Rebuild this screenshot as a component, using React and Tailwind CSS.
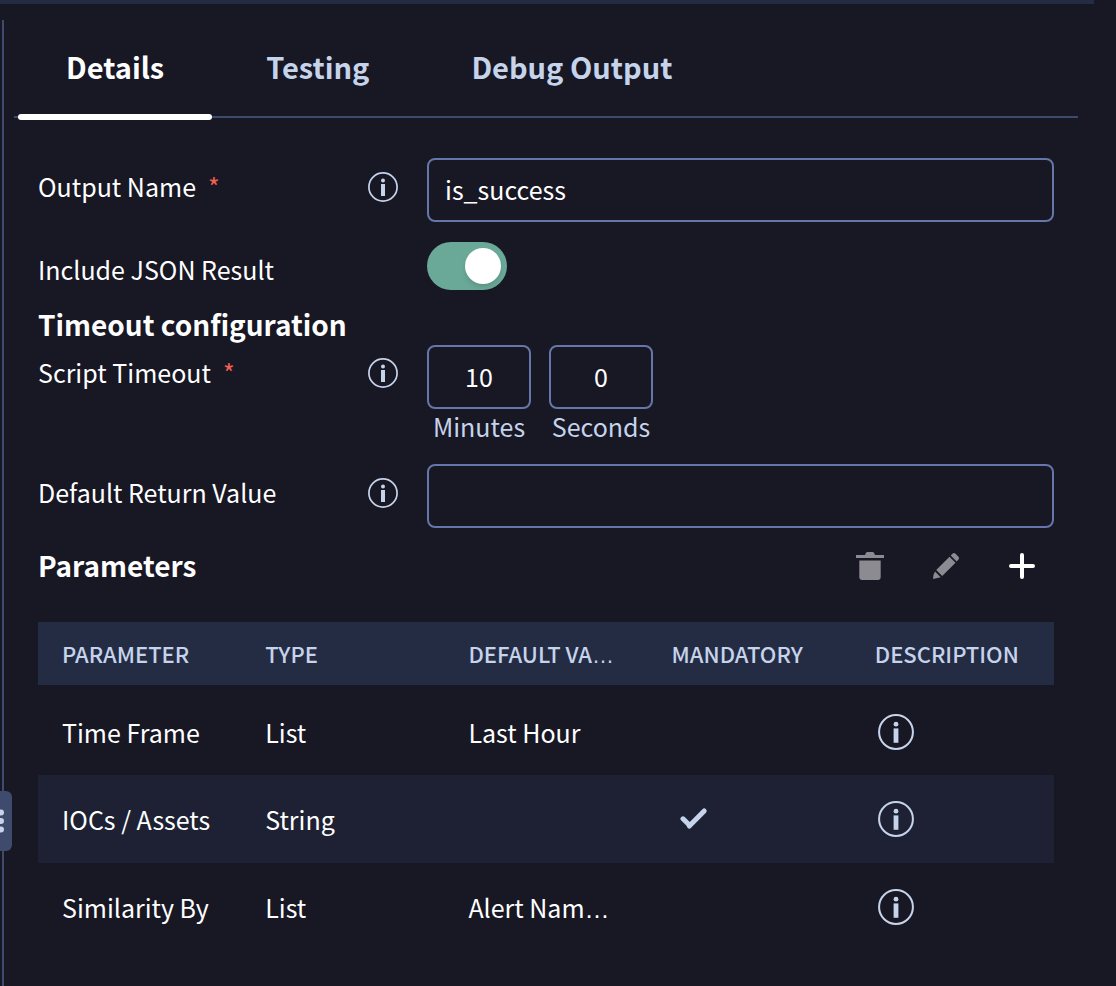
import React from "react";

function InfoIcon({ className }) {
  return (
    <svg viewBox="0 0 30 30" className={className} fill="none" aria-hidden="true">
      <circle cx="15" cy="15" r="14.1" stroke="currentColor" strokeWidth="1.7" />
      <circle cx="15" cy="8.5" r="2" fill="currentColor" />
      <path d="M13 12h4v12h-4z" fill="currentColor" />
    </svg>
  );
}

function InfoButton({ label, large }) {
  return (
    <button type="button" aria-label={label} className="block text-[#c5d3eb]">
      <InfoIcon className={large ? "size-9" : "size-[30px]"} />
    </button>
  );
}

function FieldLabel({ htmlFor, children, required }) {
  return (
    <label htmlFor={htmlFor} className="w-[330px] shrink-0 pb-[2px] text-[25px] leading-8 text-white">
      {children}
      {required && <span className="ml-3 text-[#f2604f]">*</span>}
    </label>
  );
}

/* Sets a trailing ellipsis in a face whose dots sit on the baseline. */
function Shortened({ text }) {
  if (!text.endsWith("…")) return text;
  return (
    <>
      {text.slice(0, -1)}
      <span className="font-['Liberation_Sans',sans-serif] leading-none">…</span>
    </>
  );
}

const tabs = [
  { name: "Details", active: true },
  { name: "Testing", active: false },
  { name: "Debug Output", active: false },
];

const columns = ["PARAMETER", "TYPE", "DEFAULT VA…", "MANDATORY", "DESCRIPTION"];

const parameters = [
  { name: "Time Frame", type: "List", value: "Last Hour", mandatory: false },
  { name: "IOCs / Assets", type: "String", value: "", mandatory: true },
  { name: "Similarity By", type: "List", value: "Alert Nam…", mandatory: false },
];

const box = "h-16 rounded-lg border-2 border-[#6576a8] bg-transparent pb-[2px] text-[25px] text-white outline-none";

export default function App() {
  return (
    <div
      lang="en"
      className="flex min-h-screen flex-col bg-[#181724] font-['Noto_Sans_CJK_KR',sans-serif] text-white"
    >
      <div className="mr-[22px] h-1 bg-[#242c44]" />
      <div className="flex flex-1 pt-4">
        <aside className="relative w-[14px] shrink-0 pl-[2px]">
          <div className="h-full w-[2px] bg-[#3e4b6d]" />
          <button
            type="button"
            aria-label="Resize panel"
            className="absolute top-[771px] left-0 h-[60px] w-3 rounded-r-md bg-[#3e4b6d]"
          >
            <svg viewBox="0 0 12 60" className="h-[60px] w-3" fill="#c5d3eb" aria-hidden="true">
              <circle cx="1" cy="21.5" r="3" />
              <circle cx="1" cy="30" r="3" />
              <circle cx="1" cy="38.5" r="3" />
            </svg>
          </button>
        </aside>

        <main className="min-w-0 flex-1">
          <div role="tablist" className="mr-[38px] flex h-[98px] gap-[6px] border-b-2 border-[#3e4b6d] pl-1">
            {tabs.map((tab) => (
              <button
                key={tab.name}
                type="button"
                role="tab"
                aria-selected={tab.active}
                className={
                  tab.active
                    ? "relative px-12 pb-[2px] text-[29px] font-bold text-white"
                    : "relative px-12 pb-[2px] text-[29px] font-bold text-[#c5d3eb]"
                }
              >
                {tab.name}
                {tab.active && (
                  <span className="absolute -bottom-1 left-0 h-[6px] w-full rounded-sm bg-white" />
                )}
              </button>
            ))}
          </div>

          <form className="pt-10 pr-[62px] pl-6" onSubmit={(e) => e.preventDefault()}>
            <div className="flex items-start">
              <div className="flex h-[58px] items-center">
                <FieldLabel htmlFor="output-name" required>Output Name</FieldLabel>
                <InfoButton label="About output name" />
              </div>
              <input
                id="output-name"
                defaultValue="is_success"
                className={`${box} ml-[29px] min-w-0 flex-1 px-4`}
              />
            </div>

            <div className="mt-5 flex items-start">
              <div className="flex h-14 items-center">
                <FieldLabel htmlFor="include-json">Include JSON Result</FieldLabel>
              </div>
              <label className="ml-[59px] flex h-12 w-20 cursor-pointer items-center rounded-full bg-[#4a5270] p-[6px] has-checked:justify-end has-checked:bg-[#6aa898]">
                <input
                  id="include-json"
                  type="checkbox"
                  role="switch"
                  defaultChecked
                  aria-label="Include JSON Result"
                  className="size-9 appearance-none rounded-full bg-white shadow-md"
                />
              </label>
            </div>

            <h2 className="mt-[6px] mb-px text-[28px] leading-10 font-bold">Timeout configuration</h2>

            <div className="flex items-start">
              <div className="flex h-14 items-center">
                <FieldLabel htmlFor="minutes" required>Script Timeout</FieldLabel>
                <InfoButton label="About script timeout" />
              </div>
              <div className="ml-[29px] flex gap-[18px] text-[25px] leading-[34px] text-[#c5d3eb]">
                <div className="flex w-[104px] flex-col items-center">
                  <input id="minutes" defaultValue="10" className={`${box} w-full text-center`} />
                  <label htmlFor="minutes">Minutes</label>
                </div>
                <div className="flex w-[104px] flex-col items-center">
                  <input id="seconds" defaultValue="0" className={`${box} w-full text-center`} />
                  <label htmlFor="seconds">Seconds</label>
                </div>
              </div>
            </div>

            <div className="mt-[21px] flex items-start">
              <div className="flex h-[58px] items-center">
                <FieldLabel htmlFor="default-return">Default Return Value</FieldLabel>
                <InfoButton label="About default return value" />
              </div>
              <input id="default-return" className={`${box} ml-[29px] min-w-0 flex-1 px-4`} />
            </div>

            <div className="mt-[18px] flex h-10 items-center justify-between">
              <h2 className="pb-[2px] text-[28px] leading-10 font-bold">Parameters</h2>
              <div className="mr-[14px] flex gap-10">
                <button type="button" aria-label="Delete parameter" className="text-[#8b8b91]">
                  <svg viewBox="0 0 36 36" className="size-9" fill="currentColor" aria-hidden="true">
                    <path d="M4 7h9l1-2.2Q14.500 4 15.500 4h5q1 0 1.500.8L23 7h9v3H4zM7.300 12.500h21.400v16.500q0 3-3 3H10.300q-3 0-3-3z" />
                  </svg>
                </button>
                <button type="button" aria-label="Edit parameter" className="text-[#8b8b91]">
                  <svg viewBox="0 0 36 36" className="size-9" fill="currentColor" aria-hidden="true">
                    <path d="M21.500 8.800 27.500 14.800 14.200 28.100 8.200 22.100zM22.700 7.600 24.700 5.600Q26 4.300 27.300 5.600L30.500 8.800Q31.800 10.100 30.500 11.400L28.600 13.400zM7 23.500 12.700 29.200 5 31Q5 26.500 7 23.500z" />
                  </svg>
                </button>
                <button type="button" aria-label="Add parameter" className="text-white">
                  <svg viewBox="0 0 36 36" className="size-9" fill="none" stroke="currentColor" strokeWidth="4" strokeLinecap="round" aria-hidden="true">
                    <path d="M18 7v22M7 18h22" />
                  </svg>
                </button>
              </div>
            </div>

            <table className="mt-9 w-full table-fixed border-collapse text-left">
              <thead>
                <tr className="h-[65px] border-b-4 border-[#181724] bg-[#242c44] text-[22px] text-[#c5d3eb]">
                  {columns.map((column) => (
                    <th key={column} scope="col" className="px-6 pt-0 pb-[2px] leading-8 font-medium whitespace-nowrap">
                      <Shortened text={column} />
                    </th>
                  ))}
                </tr>
              </thead>
              <tbody>
                {parameters.map((row) => (
                  <tr key={row.name} className="h-[88px] text-[25px] leading-9 even:bg-[#1d2133]">
                    <td className="pb-px pl-6 whitespace-nowrap">{row.name}</td>
                    <td className="pb-px pl-6 whitespace-nowrap">{row.type}</td>
                    <td className="pb-px pl-6 whitespace-nowrap">
                      <Shortened text={row.value} />
                    </td>
                    <td className="px-8">
                      {row.mandatory && (
                        <svg viewBox="0 0 28 24" className="h-6 w-7 text-[#c5d3eb]" fill="none" stroke="currentColor" role="img" aria-label="Mandatory">
                          <path d="M3 11.800 9.300 18" strokeWidth="5" strokeLinecap="round" />
                          <path d="M24.200 4 9.300 19" strokeWidth="5" strokeLinecap="round" />
                        </svg>
                      )}
                    </td>
                    <td className="px-[27px]">
                      <InfoButton large label={`Description of ${row.name}`} />
                    </td>
                  </tr>
                ))}
              </tbody>
            </table>
          </form>
        </main>
      </div>
    </div>
  );
}
